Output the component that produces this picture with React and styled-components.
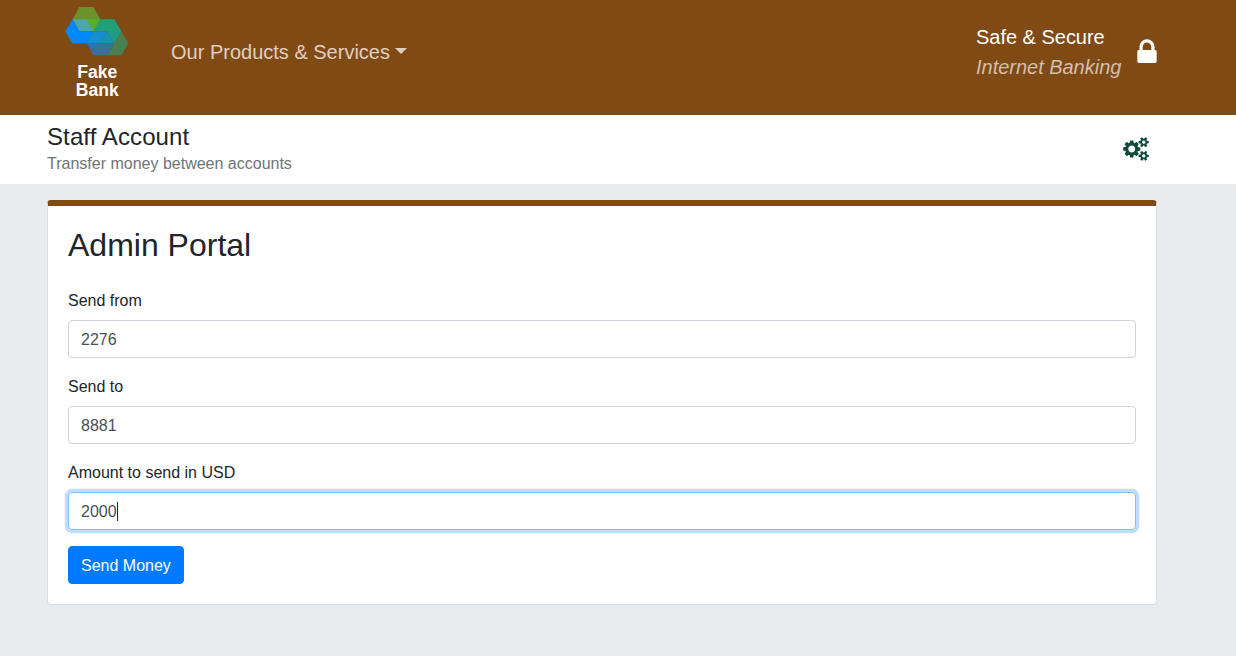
import React from 'react';
import styled, { createGlobalStyle } from 'styled-components';

const GlobalStyle = createGlobalStyle`
  *, *::before, *::after { box-sizing: border-box; }
  body {
    margin: 0;
    background: #e8ecef;
    color: #212529;
    font-family: 'Liberation Sans', Arial, sans-serif;
    font-size: 16px;
    line-height: 1.5;
  }
  #root { min-height: 100vh; }
`;

const Container = styled.div`
  width: 1110px;
  margin-left: 47px;
  display: flex;
`;

const Header = styled.header`
  height: 115px;
  background: #804a15;
`;

const HeaderRow = styled(Container)`
  height: 100%;
  align-items: flex-start;
`;

const Logo = styled.svg`
  display: block;
  width: 84px;
  height: 110px;
  margin-left: 9px;
`;

const NavToggle = styled.a`
  display: flex;
  align-items: center;
  margin: 37px 0 0 31px;
  font-size: 20px;
  line-height: 30px;
  color: #e0cfc0;
  text-decoration: none;

  &::after {
    content: '';
    margin: -2px 0 0 5px;
    border-top: 6px solid;
    border-left: 6px solid transparent;
    border-right: 6px solid transparent;
  }
`;

const Secure = styled.div`
  width: 146px;
  margin: 22px 15px 0 auto;
  font-size: 20px;
  line-height: 30px;
  letter-spacing: -0.02px;
  white-space: nowrap;
  color: #fff;
`;

const Muted = styled.em`
  display: block;
  color: #d3bfac;
`;

const LockIcon = styled.svg`
  width: 20px;
  height: 24px;
  margin-top: 39px;
`;

const AccountBar = styled.section`
  height: 69px;
  background: #fff;
`;

const AccountRow = styled(Container)`
  justify-content: space-between;
  align-items: flex-start;
  padding: 8px 7px 0 0;
`;

const AccountName = styled.h4`
  margin: 0;
  font-size: 24px;
  font-weight: 400;
  line-height: 28.8px;
  letter-spacing: 0.1px;
`;

const AccountNote = styled.p`
  margin: 0;
  line-height: 24px;
  color: #6f7478;
`;

const CogsIcon = styled.svg`
  width: 26px;
  height: 24px;
  margin: 14.4px 1px 0 0;
`;

const Card = styled.main`
  width: 1110px;
  margin: 16px 0 0 47px;
  padding: 20px;
  background: #fff;
  border: 1px solid #dadddf;
  border-top: 6px solid #804a15;
  border-radius: 4px;
`;

const Title = styled.h2`
  margin: 0 0 23.6px;
  font-size: 32px;
  font-weight: 400;
  line-height: 38.4px;
`;

const Field = styled.div`
  margin-bottom: 16px;
`;

const Label = styled.label`
  display: block;
  padding-top: 1px;
  margin-bottom: 7px;
  line-height: 24px;
`;

const InputBox = styled.div`
  display: flex;
  align-items: center;
  height: 38px;
  padding: 2px 12px 0;
  border: 1px solid ${(p) => (p.$focused ? '#80bdff' : '#ced4da')};
  border-radius: 4px;
  box-shadow: ${(p) => (p.$focused ? '0 0 0 3.2px rgba(0, 123, 255, 0.25)' : 'none')};
  color: #495057;
`;

const Caret = styled.span`
  width: 1px;
  height: 19px;
  margin-bottom: 2px;
  background: #22262a;
`;

const SendButton = styled.button`
  display: block;
  height: 38px;
  padding: 2px 12px 0;
  border: 1px solid #007bff;
  border-radius: 4px;
  background: #007bff;
  color: #fff;
  font: inherit;
`;

const logoShapes = [
  ['#6a942b', '70,21 112,21 133,58 112,94 70,94 50,58'],
  ['#58ae2a', '92,58 133,58 112,94'],
  ['#4da6a8', '50,58 92,58 112,94 70,94'],
  ['#0088ff', '50,58 70,94 112,94 92,130 49,130 28,94'],
  ['#1fa078', '133,58 175,58 196,94 175,130 154,94 112,94'],
  ['#158fd0', '112,94 154,94 134,130 92,130'],
  ['#1a93b0', '154,94 175,130 134,130'],
  ['#1f9a86', '154,94 196,94 175,130'],
  ['#3c6f9c', '92,130 175,130 154,166 112,166'],
  ['#4a7f50', '196,94 217,130 196,166 154,166'],
];

const BankLogo = () => (
  <Logo viewBox="0 0 84 110">
    <g transform="scale(0.33333)">
      {logoShapes.map(([fill, points]) => (
        <polygon key={points} fill={fill} points={points} />
      ))}
    </g>
    <g fill="#fff" fontFamily="Liberation Sans, Arial, sans-serif" fontWeight="700" fontSize="17.6" textAnchor="middle">
      <text x="41.2" y="77.6">Fake</text>
      <text x="41.2" y="95.6">Bank</text>
    </g>
  </Logo>
);

const smallGear =
  'v140q0 16-149 31-12 27-30 52 51 113 51 138 0 4-4 7-122 71-124 71-8 0-46-47t-52-68q-20 2-30 2t-30-2q-14 21-52 68t-46 47q-2 0-124-71-4-3-4-7 0-25 51-138-18-25-30-52-149-15-149-31v-140q0-16 149-31 13-29 30-52-51-113-51-138 0-4 4-7 4-2 35-20t59-34 30-16q8 0 46 46.5t52 67.5q20-2 30-2t30 2q51-71 92-112l6-2q4 0 124 70 4 3 4 7 0 25-51 138 17 23 30 52 149 15 149 31z';

const Cogs = () => (
  <CogsIcon viewBox="0 0 1920 1792" fill="#124a3d">
    <path d={`M896 896q0-106-75-181t-181-75-181 75-75 181 75 181 181 75 181-75 75-181zM1664 1408q0-52-38-90t-90-38-90 38-38 90q0 53 37.5 90.5t90.5 37.5 90.5-37.5 37.5-90.5zM1664 384q0-52-38-90t-90-38-90 38-38 90q0 53 37.5 90.5t90.5 37.5 90.5-37.5 37.5-90.5zM1280 805v185q0 10-7 19.5t-16 10.5l-155 24q-11 35-32 76 34 48 90 115 7 11 7 20 0 12-7 19-23 30-82.5 89.5t-78.5 59.5q-11 0-21-7l-115-90q-37 19-77 31-11 108-23 155-7 24-30 24h-186q-11 0-20-7.5t-10-17.5l-23-153q-34-10-75-31l-118 89q-7 7-20 7-11 0-21-8-144-133-144-160 0-9 7-19 10-14 41-53t47-61q-23-44-35-82l-152-24q-10-1-17-9.5t-7-19.5v-185q0-10 7-19.5t16-10.5l155-24q11-35 32-76-34-48-90-115-7-11-7-20 0-12 7-20 22-30 82-89t79-59q11 0 21 7l115 90q34-18 77-32 11-108 23-154 7-24 30-24h186q11 0 20 7.5t10 17.5l23 153q34 10 75 31l118-89q8-7 20-7 11 0 21 8 144 133 144 160 0 8-7 19-12 16-42 54t-45 60q23 48 34 82l152 23q10 2 17 10.5t7 19.5zM1920 1338${smallGear}M1920 314${smallGear}`} />
  </CogsIcon>
);

const Lock = () => (
  <LockIcon viewBox="310 108 1172 1428" fill="#fff">
    <path d="M640 768h512v-192q0-106-75-181t-181-75-181 75-75 181v192zM1472 864v576q0 40-28 68t-68 28h-960q-40 0-68-28t-28-68v-576q0-40 28-68t68-28h32v-192q0-184 132-316t316-132 316 132 132 316v192h32q40 0 68 28t28 68z" />
  </LockIcon>
);

const fields = [
  { label: 'Send from', value: '2276' },
  { label: 'Send to', value: '8881' },
  { label: 'Amount to send in USD', value: '2000', focused: true },
];

export default function App() {
  return (
    <>
      <GlobalStyle />
      <Header>
        <HeaderRow>
          <BankLogo />
          <NavToggle>Our Products &amp; Services</NavToggle>
          <Secure>
            Safe &amp; Secure
            <Muted>Internet Banking</Muted>
          </Secure>
          <Lock />
        </HeaderRow>
      </Header>
      <AccountBar>
        <AccountRow>
          <div>
            <AccountName>Staff Account</AccountName>
            <AccountNote>Transfer money between accounts</AccountNote>
          </div>
          <Cogs />
        </AccountRow>
      </AccountBar>
      <Card>
        <Title>Admin Portal</Title>
        {fields.map((f) => (
          <Field key={f.label}>
            <Label>{f.label}</Label>
            <InputBox $focused={f.focused}>
              {f.value}
              {f.focused && <Caret />}
            </InputBox>
          </Field>
        ))}
        <SendButton>Send Money</SendButton>
      </Card>
    </>
  );
}
